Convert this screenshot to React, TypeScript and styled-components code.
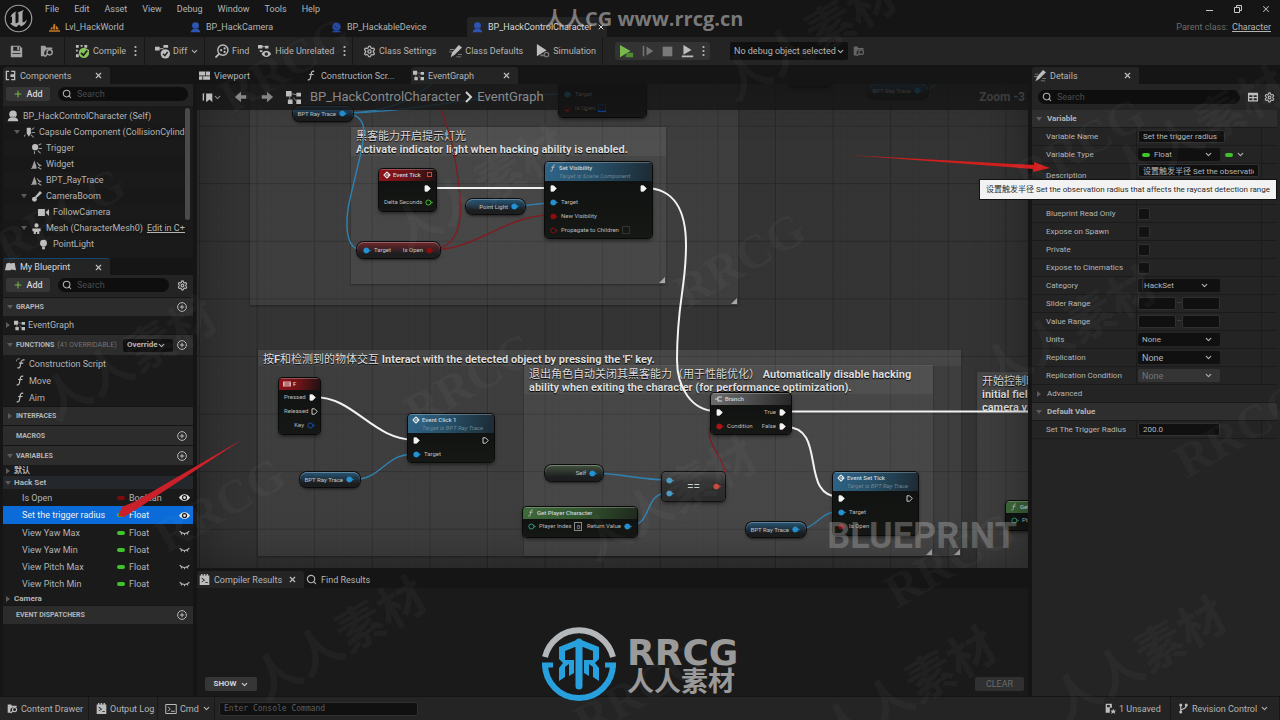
import React from "react";
import styled, { createGlobalStyle, css } from "styled-components";
import { ChevronDown, Plus, Search, Settings, X } from "lucide-react";

const GlobalStyle = createGlobalStyle`
  * { box-sizing: border-box; }
  body {
    margin: 0;
    background: #151515;
    color: #b4b4b4;
    font: 9px/12px Roboto, "Noto Sans CJK SC", sans-serif;
  }
  button, input, select {
    font: inherit;
    color: inherit;
    border: 0;
    padding: 0;
    margin: 0;
    background: none;
    outline: none;
  }
  svg { flex: none; }
  ul { list-style: none; margin: 0; padding: 0; }
`;

/* ---------- page frame ---------- */

const Page = styled.div`
  position: relative;
  display: flex;
  flex-direction: column;
  min-height: 100vh;
  overflow: hidden;
  white-space: nowrap;
`;

const Header = styled.header`
  display: flex;
  height: 37px;
`;

const LogoBox = styled.div`
  width: 44px;
  padding: 4px 0 0 4px;
`;

const HeaderMain = styled.div`
  flex: 1;
  display: flex;
  flex-direction: column;
`;

const MenuRow = styled.nav`
  display: flex;
  align-items: center;
  gap: 15px;
  height: 17px;
  padding-left: 1px;
`;

const AssetTabs = styled.div`
  display: flex;
  gap: 1px;
`;

const AssetTab = styled.button<{ $active?: boolean }>`
  display: flex;
  align-items: center;
  gap: 5px;
  width: 140px;
  height: 20px;
  padding-left: 5px;
  text-align: left;
  ${(p) => p.$active && css`background: #242424; color: #d8d8d8; border-radius: 3px 3px 0 0;`}
`;

const HeaderSide = styled.div`
  display: flex;
  flex-direction: column;
  align-items: flex-end;
  padding-right: 9px;
`;

const WindowButtons = styled.div`
  display: flex;
  align-items: center;
  gap: 18px;
  height: 17px;
  button { display: flex; }
`;

const ParentClass = styled.div`
  display: flex;
  align-items: center;
  gap: 4px;
  height: 20px;
  color: #6c6c6c;
  a { color: #b4b4b4; }
`;

/* ---------- toolbar ---------- */

const Toolbar = styled.div`
  display: flex;
  align-items: center;
  height: 28px;
  background: #242424;
  margin-bottom: 2px;
`;

const ToolGroup = styled.div<{ $w: number; $gap?: number }>`
  display: flex;
  align-items: center;
  width: ${(p) => p.$w}px;
  height: 28px;
  padding-left: 10px;
  gap: ${(p) => p.$gap ?? 10}px;
  border-right: 1px solid #171717;
`;

const ToolButton = styled.button`
  display: flex;
  align-items: center;
  gap: 3px;
  flex: none;
`;

const PlayGroup = styled.div`
  display: flex;
  align-items: center;
  justify-content: space-between;
  width: 95px;
  height: 18px;
  margin: 0 20px 0 12px;
  padding: 0 5px;
  background: #333;
  border-radius: 3px;
  button { display: flex; }
`;

const DebugTarget = styled.div`
  display: flex;
  align-items: center;
  gap: 5px;
`;

/* ---------- panels ---------- */

const Main = styled.main`
  flex: 1;
  display: grid;
  grid-template-columns: 193px minmax(0, 1fr) 248px;
  column-gap: 4px;
  min-height: 629px;
`;

const Sidebar = styled.aside`
  position: relative;
  display: flex;
  flex-direction: column;
  padding-left: 3px;
`;

const Panel = styled.section<{ $grow?: boolean }>`
  display: flex;
  flex-direction: column;
  background: #1a1a1a;
  ${(p) => p.$grow && css`flex: 1;`}
`;

const TabStrip = styled.div`
  display: flex;
  height: 17px;
  background: #151515;
`;

const PanelTab = styled.div<{ $active?: boolean; $focus?: boolean }>`
  display: flex;
  align-items: center;
  width: 107px;
  padding: 0 7px 0 2px;
  gap: 4px;
  ${(p) => p.$active && css`background: #242424; border-radius: 3px 3px 0 0;`}
  ${(p) => p.$focus && css`border-top: 1px solid #14456f; color: #d8d8d8;`}
`;

const TabLabel = styled.button`
  display: flex;
  align-items: center;
  flex: 1;
  gap: 4px;
  text-align: left;
`;

const CloseButton = styled.button`
  display: flex;
  color: #c4c4c4;
`;

const PanelTools = styled.div`
  display: flex;
  align-items: center;
  gap: 8px;
  height: 22px;
  padding: 0 5px 2px 3px;
  background: #242424;
`;

const AddButton = styled.button`
  display: flex;
  align-items: center;
  justify-content: center;
  gap: 3px;
  width: 44px;
  height: 14px;
  background: #363636;
  border-radius: 2px;
  color: #d6d6d6;
  font-weight: 500;
`;

const SearchPill = styled.label`
  display: flex;
  align-items: center;
  flex: 1;
  gap: 5px;
  height: 14px;
  padding: 0 4px;
  min-width: 0;
  border-radius: 7px;
  background: #0e0e0e;
  input { flex: 1; min-width: 0; }
  input::placeholder { color: #4c4c4c; opacity: 1; }
`;

const TreeArea = styled.div`
  display: flex;
  height: 152px;
  padding: 2px 3px 0 0;
  background: #1a1a1a;
`;

const Tree = styled.ul`
  flex: 1;
  min-width: 0;
  overflow: hidden;
`;

const TreeRow = styled.li<{ $depth: number }>`
  display: flex;
  align-items: center;
  height: 16px;
  gap: 4px;
  padding-left: ${(p) => 4 + p.$depth * 7}px;
  &:nth-child(even) { background: #181818; }
`;

const EditLink = styled.a`
  color: inherit;
`;

const Caret = styled.span<{ $closed?: boolean; $hidden?: boolean }>`
  flex: none;
  width: 0;
  height: 0;
  border: 3px solid transparent;
  ${(p) =>
    p.$closed
      ? css`border-left: 4px solid #5c5c5c; border-right: 0; margin: 0 1px;`
      : css`border-top: 4px solid #5c5c5c; border-bottom: 0;`}
  ${(p) => p.$hidden && css`visibility: hidden;`}
`;

const ScrollThumb = styled.div`
  width: 5px;
  height: 112px;
  border-radius: 3px;
  background: #4a4a4a;
`;

const SectionHead = styled.div<{ $h?: number }>`
  display: flex;
  align-items: center;
  height: ${(p) => p.$h ?? 19}px;
  padding: 0 6px 0 4px;
  gap: 3px;
  border-top: 1px solid #151515;
  background: #2c2c2c;
  font-size: 7px;
  font-weight: 700;
  small { font-size: 7px; font-weight: 400; color: #747474; }
  > button { display: flex; margin-left: auto; }
`;

const OverrideBox = styled.div`
  margin-left: auto;
  font-size: 8px;
  + button { margin-left: 1px; }
`;

const ListRow = styled.li<{ $h: number; $indent: number }>`
  display: flex;
  align-items: center;
  gap: 3px;
  height: ${(p) => p.$h}px;
  padding-left: ${(p) => p.$indent}px;
`;

const GroupRow = styled.div<{ $h: number; $lit?: boolean }>`
  display: flex;
  align-items: center;
  gap: 3px;
  height: ${(p) => p.$h}px;
  padding-left: 2px;
  font-size: 8px;
  font-weight: 700;
  ${(p) => p.$lit && css`background: #24272c;`}
`;

const VarRow = styled.li<{ $selected?: boolean }>`
  display: grid;
  grid-template-columns: 95px 12px 1fr 12px;
  align-items: center;
  height: ${(p) => (p.$selected ? 18 : 17)}px;
  padding: 0 2px 0 19px;
  ${(p) => p.$selected && css`background: #0b6bd8; color: #f0f0f0;`}
`;

const TypePill = styled.i<{ $red?: boolean }>`
  display: block;
  width: 8px;
  height: 4px;
  border-radius: 2px;
  background: ${(p) => (p.$red ? "#7a0c0c" : "#3fc22c")};
`;

/* ---------- selects and fields ---------- */

interface ShellProps { $w: number; $h?: number; $off?: boolean; $tight?: boolean; $split?: boolean; $big?: boolean }

const SelectShell = styled.label<ShellProps>`
  position: relative;
  display: flex;
  align-items: center;
  width: ${(p) => p.$w}px;
  height: ${(p) => p.$h ?? 13}px;
  border-radius: 2px;
  background: ${(p) => (p.$off ? "#343434" : "#101010")};
  padding-left: ${(p) => (p.$split ? 6 : 4)}px;
  gap: 4px;
  font-size: ${(p) => (p.$big ? "9px" : "inherit")};
  select {
    appearance: none;
    flex: 1;
    min-width: 0;
    padding-right: ${(p) => (p.$tight ? 0 : 14)}px;
  }
  select:disabled { color: #747474; opacity: 1; }
  > svg:last-child {
    position: absolute;
    right: ${(p) => (p.$tight ? 3 : p.$split ? 11 : 7)}px;
    pointer-events: none;
  }
  ${(p) => p.$split && css`box-shadow: inset 4px 0 0 #101010, inset 5px 0 0 #2a2a2a;`}
`;

interface DropProps {
  label: string;
  value: string;
  w: number;
  h?: number;
  disabled?: boolean;
  pill?: boolean;
  tight?: boolean;
  split?: boolean;
  big?: boolean;
}

const Drop = ({ label, value, w, h, disabled, pill, tight, split, big }: DropProps) => (
  <SelectShell $w={w} $h={h} $off={disabled} $tight={tight} $split={split} $big={big}>
    {pill && <TypePill />}
    <select aria-label={label} disabled={disabled} defaultValue={value}>
      <option>{value}</option>
    </select>
    <ChevronDown size={9} strokeWidth={3} />
  </SelectShell>
);

/* ---------- icons ---------- */

const Svg = ({ s = 12, children, c = "#bdbdbd" }: { s?: number; c?: string; children: React.ReactNode }) => (
  <svg width={s} height={s} viewBox="0 0 16 16" fill={c} stroke="none" aria-hidden="true">
    {children}
  </svg>
);

const UnrealLogo = () => (
  <svg width="29" height="29" viewBox="0 0 58 58" aria-hidden="true">
    <circle cx="29" cy="29" r="26.5" fill="#111" stroke="#9c9c9c" strokeWidth="2.4" />
    <path
      fill="#a8a8a8"
      d="M12 27 C15 20 20 16 26 14 C23 16 23 18 23 20 L23 37 C23 39 25 39 26 38 L29 36 L29 20 C29 18 28 18 26 19 C30 15 34 14 40 12 C38 14 37 16 37 18 L37 35 C37 37 39 37 41 36 L46 31 C44 39 39 43 34 45 L30 41 L25 46 C19 45 15 42 12 38 C14 39 16 38 16 36 L16 26 C16 24 14 25 12 27Z"
    />
  </svg>
);

const LevelIcon = () => (
  <Svg s={11} c="#c97a1e"><path d="M0 14h16v-2H0zM2 11l1-3 2-1v4zM6 11V4l3-2v9zM10 11V5l3 3 1 3z" /></Svg>
);
const ActorIcon = ({ c = "#2d55b4", s = 11 }: { c?: string; s?: number }) => (
  <Svg s={s} c={c}><circle cx="8" cy="5.5" r="5" /><path d="M1 15c0-3 2-4 4-5h6c2 1 4 2 4 5z" /><path d="M5 8.500c2 1.500 4 1.500 6 0" stroke="#0007" fill="none" /></Svg>
);
const SphereIcon = () => (
  <Svg s={11} c="#24489c"><circle cx="8" cy="7" r="6.2" /><path d="M2 13h12v2H2z" /><path d="M5 5l4 4" stroke="#0008" /></Svg>
);
const SaveIcon = () => (
  <Svg s={13} c="#a4a4a4"><path fillRule="evenodd" d="M1 1h11l3 3v11H1zM4 2v5h8V2z" /><path d="M9 2h2v4H9z" /><path d="M3 10h10v1H3z" fill="#242424" /></Svg>
);
const BrowseIcon = ({ c = "#9f9f9f", s = 14 }: { c?: string; s?: number }) => (
  <Svg s={s} c={c}>
    <path d="M1 2h5l1 2h7v2H8a5 5 0 0 0-2 8H1z" />
    <circle cx="11" cy="9.5" r="3" fill="none" stroke={c} strokeWidth="1.6" /><path d="M8.500 11.500l-3 3" stroke={c} strokeWidth="1.800" />
  </Svg>
);
const CompileIcon = () => (
  <Svg s={15}>
    <path d="M1 1h3v3H1zM6 1h2v2H6zM10 1h3v3h-3zM1 6h2v2H1zM1 11h3v3H1zM13 6h2v2h-2z" />
    <circle cx="9.500" cy="9.500" r="5.500" fill="#86c35a" /><path d="M6.500 9.500l2.500 2.500 4-5" fill="none" stroke="#1c1c1c" strokeWidth="1.800" />
  </Svg>
);
const DiffIcon = () => (
  <Svg s={15}>
    <path d="M0 3h5v4H0zM9 1h5v3H9z" /><path d="M5 5h4" stroke="#bdbdbd" />
    <circle cx="11" cy="10.500" r="5" /><path d="M8.500 10.500l2 2 3-4" fill="none" stroke="#242424" strokeWidth="1.600" />
  </Svg>
);
const FindIcon = () => (
  <Svg s={14}>
    <circle cx="9" cy="7" r="5.800" fill="none" stroke="#bdbdbd" strokeWidth="1.600" />
    <path d="M5 11l-4.500 4.500" stroke="#bdbdbd" strokeWidth="2" /><circle cx="7" cy="7" r="1.300" /><circle cx="11" cy="5" r="1.300" /><circle cx="11" cy="9" r="1.300" />
  </Svg>
);
const HideIcon = () => (
  <Svg s={14}>
    <path d="M0 1h5v4H0zM8 2h4v3H8zM2 7h3v2H2z" /><path d="M4 3h5" stroke="#bdbdbd" />
    <path d="M4 11.500c3-5 8-5 11 0-3 4.500-8 4.500-11 0z" /><circle cx="9.500" cy="11.500" r="2" fill="#242424" />
  </Svg>
);
const PenIcon = ({ s = 12 }: { s?: number }) => (
  <Svg s={s}><path d="M12 0l4 3-9 9-5 3 2-6z" /><path d="M1 5h5v1H1zM0 8h4v1H0zM11 11h5v1h-5zM9 14h6v1H9z" fill="#8a8a8a" /></Svg>
);
const SimIcon = () => (
  <Svg s={14}><path d="M1 0l11 7-11 7z" /><circle cx="12" cy="12" r="2.500" fill="none" stroke="#777" strokeWidth="1.500" /><path d="M5 12h4v2H5z" fill="#777" /></Svg>
);
const PlayIcon = () => (
  <Svg s={14} c="#79b84a"><path d="M0 1l12 7-12 7z" /><path d="M8 10h7v5H6z" fill="#4f8a35" /></Svg>
);
const StepIcon = () => (
  <Svg s={12} c="#747474"><path d="M1 1h2v14H1z" /><path d="M6 2l9 6-9 6z" /></Svg>
);
const StopIcon = () => <Svg s={11} c="#7a7a7a"><path d="M1 1h14v14H1z" /></Svg>;
const EjectIcon = () => <Svg s={13}><path d="M3 0l10 6-10 6zM1 13h14v2H1z" /></Svg>;
const DotsIcon = () => (
  <svg width="3" height="12" viewBox="0 0 3 12" fill="#bdbdbd" aria-hidden="true">
    <circle cx="1.500" cy="2" r="1.100" /><circle cx="1.500" cy="6" r="1.100" /><circle cx="1.500" cy="10" r="1.100" />
  </svg>
);
const CompIcon = () => (
  <Svg s={11}><path d="M1 1h5v2H3v10h3v2H1zM9 1h6v14H9v-2h4v-3H8V6h5V3H9z" /></Svg>
);
const BookIcon = () => <Svg s={11}><path d="M2 2l5-1 1 1 6-1 2 11-7-1-1 1-8 0z" /></Svg>;
const ViewIcon = () => <Svg s={11}><path d="M0 2h9v6H0zM10 2h6v6h-6zM0 9h5v5H0zM6 9h10v5H6z" /></Svg>;
const FuncIcon = ({ s = 11 }: { s?: number }) => (
  <Svg s={s}><path d="M12 2c-3-1-4 1-4.500 4L6.500 11c-.5 3-1.500 4-4 3M4.500 6.500h6.500" fill="none" stroke="#bdbdbd" strokeWidth="1.700" /></Svg>
);
const ScriptIcon = () => (
  <Svg s={11}><path d="M14 3c-3-1-5 1-5.500 4L7.500 12c-.5 2-1.500 3-4 2M6 7.500h6" fill="none" stroke="#bdbdbd" strokeWidth="1.600" /><path d="M2 5c0-3 2-4 5-4" fill="none" stroke="#bdbdbd" /></Svg>
);
const GraphIcon = ({ s = 12 }: { s?: number }) => (
  <Svg s={s}><path d="M0 1h6v6H0zM11 3h5v4h-5zM2 10h5v5H2zM11 10h5v5h-5z" /><path d="M6 4l5 1M4 6v5M8 8l3 4" stroke="#8d8d8d" /></Svg>
);
const CapsuleIcon = () => (
  <Svg s={11}><path d="M4 1h6v8l-3 5-3-5z" /><path d="M11 4l4-3M11 8h5M10 11l4 4M2 11l-2 3" stroke="#8d8d8d" strokeWidth="1.500" /></Svg>
);
const TriggerIcon = () => (
  <Svg s={11}><circle cx="6" cy="6" r="4.500" /><path d="M11 3l4-2M11 8h5M10 11l4 4M5 12v4" stroke="#9d9d9d" strokeWidth="1.500" /></Svg>
);
const SceneIcon = () => (
  <Svg s={11} c="#9f9f9f"><path d="M1 13l4-11 3 9v2zM0 13h8v1H0z" /><path d="M9 5l4 6M10 12l5 3M12 8l3 2" stroke="#9f9f9f" strokeWidth="1.500" /></Svg>
);
const BoomIcon = () => (
  <Svg s={11}><path d="M13 0l3 3-8 7-2-2z" /><circle cx="5" cy="12" r="3.500" /></Svg>
);
const CameraIcon = () => <Svg s={11}><path d="M0 3h10v10H0zM11 8l5-5v10z" /></Svg>;
const MeshIcon = () => (
  <Svg s={11}><circle cx="8" cy="3.500" r="3" /><path d="M2 8h12v4h-2v4h-3v-3H7v3H4v-4H2z" /></Svg>
);
const BulbIcon = () => <Svg s={11}><circle cx="8" cy="6" r="5" /><path d="M6 11h4v4H6z" /></Svg>;
const AddCircle = () => (
  <svg width="10" height="10" viewBox="0 0 16 16" fill="none" stroke="#b8b8b8" strokeWidth="1.600" aria-hidden="true">
    <circle cx="8" cy="8" r="7" /><path d="M8 4.500v7M4.500 8h7" />
  </svg>
);
const EyeIcon = () => (
  <Svg s={11} c="#e4e4e4"><path d="M0 8c4-6.500 12-6.500 16 0-4 6.500-12 6.500-16 0z" /><circle cx="8" cy="8" r="3.800" fill="#1a1a1a" /><circle cx="8" cy="8" r="2" /></Svg>
);
const EyeShutIcon = () => (
  <Svg s={11}><path d="M1 6c3 4.500 11 4.500 14 0M4 9l-1 2M8 10v2M12 9l1 2" fill="none" stroke="#b4b4b4" strokeWidth="1.500" /></Svg>
);
const LogIcon = () => (
  <Svg s={11}><path fillRule="evenodd" d="M1 2h2V0h2v2h2V0h2v2h2V0h2v2h2v14H1zM4 5v2l3 2-3 2v1l5-3zM9 12v1h4v-1z" /></Svg>
);
const CmdIcon = () => (
  <Svg s={12}><path d="M1 2h14v12H1z" fill="none" stroke="#bdbdbd" strokeWidth="1.300" /><path d="M4 5l3 3-3 3M8 11h5" fill="none" stroke="#bdbdbd" strokeWidth="1.300" /></Svg>
);
const UnsavedIcon = () => (
  <Svg s={11}><path fillRule="evenodd" d="M1 1h9v6H7v7H1zM3 3v3h4V3z" /><path d="M12 8l1 3h3l-2 2 1 3-3-2-3 2 1-3-2-2h3z" /></Svg>
);
const BranchIcon = () => (
  <Svg s={11}><circle cx="4" cy="3" r="2.200" /><circle cx="12" cy="3" r="2.200" /><circle cx="4" cy="13" r="2.200" /><path d="M4 3v10M12 4c0 4-4 5-8 6" fill="none" stroke="#bdbdbd" strokeWidth="1.800" /></Svg>
);
const TableIcon = () => (
  <Svg s={10}><path fillRule="evenodd" d="M0 1h16v14H0zM2 5v3h5V5zM9 5v3h5V5zM2 10v3h5v-3zM9 10v3h5v-3z" /></Svg>
);
const ArrowIcon = ({ flip }: { flip?: boolean }) => (
  <Svg s={14} c="#858585"><path d={flip ? "M15 8L8 2v4H2v4h6v4z" : "M1 8l7-6v4h6v4H8v4z"} /></Svg>
);
const BookmarkIcon = () => (
  <Svg s={11}><path d="M1 2h3v1H3v9l-2 1zM6 2h9v13l-4-4-5 4z" /></Svg>
);

/* ---------- graph ---------- */

const Center = styled.div`
  display: flex;
  flex-direction: column;
  min-width: 0;
`;

const GraphCanvas = styled.div`
  position: relative;
  flex: none;
  height: 484px;
  overflow: hidden;
  background: #343434;
`;

const Layer = styled.svg`
  position: absolute;
  inset: 0;
  width: 100%;
  height: 100%;
`;

const Vignette = styled.div`
  position: absolute;
  inset: 0;
  pointer-events: none;
  box-shadow: inset 0 0 50px rgba(0, 0, 0, 0.4);
`;

const Crumbs = styled.div`
  position: absolute;
  top: 0;
  left: 0;
  right: 0;
  display: flex;
  align-items: center;
  height: 26px;
  padding: 0 3px 0 5px;
  gap: 12px;
  background: rgba(20, 20, 20, 0.78);
  color: #8a8a8a;
  font-size: 13px;
  line-height: 16px;
  button { display: flex; align-items: center; }
`;

const Path = styled.div`
  display: flex;
  align-items: center;
  gap: 4px;
  > svg:first-child { margin-right: 5px; }
`;

const ZoomLabel = styled.span`
  margin-left: auto;
  color: #3d3d3d;
  font-size: 12px;
  font-weight: 700;
`;

const Stamp = styled.div`
  position: absolute;
  right: 11px;
  bottom: 12px;
  color: rgba(200, 200, 200, 0.34);
  font-size: 36px;
  line-height: 40px;
  font-weight: 700;
`;

interface Box { $x: number; $y: number; $w: number; $h: number }

const place = css<Box>`
  position: absolute;
  left: ${(p) => p.$x}px;
  top: ${(p) => p.$y}px;
  width: ${(p) => p.$w}px;
  height: ${(p) => p.$h}px;
`;

const Comment = styled.div<Box>`
  ${place}
  background: rgba(255, 255, 255, 0.05);
  box-shadow: 0 1px 2px rgba(0, 0, 0, 0.35);
  &::after {
    content: "";
    position: absolute;
    right: 1px;
    bottom: 1px;
    border: 3px solid transparent;
    border-right-color: #a8a8a8;
    border-bottom-color: #a8a8a8;
  }
`;

const CommentTitle = styled.div`
  padding: 3px 5px 0;
  background: rgba(255, 255, 255, 0.05);
  color: #dcdcdc;
  font-size: 11px;
  line-height: 13px;
  font-weight: 700;
  text-shadow: 0 1px 1px #000;
  span { font-weight: 400; }
`;

const Node = styled.div<Box>`
  ${place}
  border-radius: 4px;
  background: linear-gradient(#0e100f, #161816);
  box-shadow: 0 0 0 1px #0a0a0a, 0 2px 4px rgba(0, 0, 0, 0.6);
  overflow: hidden;
  color: #bcbcbc;
  font-size: 6px;
  line-height: 8px;
`;

const tones = {
  red: "linear-gradient(100deg, #8f1219, #6d1418 50%, #1c1112)",
  blue: "linear-gradient(100deg, #2e6488, #275069 45%, #1c2a33)",
  green: "linear-gradient(100deg, #3f6b3c, #34552f 50%, #1f2a1e)",
  grey: "linear-gradient(100deg, #6d6d6d, #4d4d4d 50%, #262626)",
};

const NodeHead = styled.div<{ $tone: keyof typeof tones; $tall?: boolean }>`
  display: flex;
  align-items: flex-start;
  height: ${(p) => (p.$tall ? 19 : 12)}px;
  padding: 2px 4px;
  gap: 2px;
  background: ${(p) => tones[p.$tone]};
  box-shadow: inset 0 1px 0 rgba(255, 255, 255, 0.25);
  color: #cdd6da;
  font-weight: 500;
  small { display: block; font-size: 6px; font-weight: 400; font-style: italic; color: #6d8795; }
  > i { margin-left: auto; width: 5px; height: 5px; margin-top: 1px; border: 1px solid #e0402f; }
`;

const PinRow = styled.div<{ $h?: number }>`
  display: flex;
  align-items: center;
  justify-content: space-between;
  height: ${(p) => p.$h ?? 14}px;
  padding: 0 5px;
`;

const PinLabel = styled.label`
  display: flex;
  align-items: center;
  gap: 3px;
  input[type="checkbox"] {
    appearance: none;
    width: 8px;
    height: 8px;
    border: 1px solid #333;
  }
  input[type="checkbox"]:checked { border-color: #14408c; background: #0b1c3c; }
  input[type="text"] { width: 8px; height: 9px; border: 1px solid #8a8a8a; text-align: center; }
`;

const Pill = styled.div<Box & { $tint: string; $end?: boolean }>`
  ${place}
  display: flex;
  align-items: center;
  justify-content: ${(p) => (p.$end ? "flex-end" : "space-between")};
  padding: 0 6px;
  gap: 3px;
  border-radius: 7px;
  background: linear-gradient(${(p) => p.$tint}, rgba(24, 26, 28, 0.92) 75%);
  box-shadow: 0 0 0 1px #0c0c0c, inset 0 1px 0 rgba(255, 255, 255, 0.28), 0 2px 3px rgba(0, 0, 0, 0.6);
  color: #c4c4c4;
  font-size: 6px;
  line-height: 8px;
`;

const OpNode = styled.div<Box>`
  ${place}
  display: flex;
  align-items: center;
  justify-content: space-between;
  padding: 0 4px;
  border-radius: 4px;
  background: linear-gradient(#4a4a4a, #303030 40%, #2a2a2a);
  box-shadow: 0 0 0 1px #101010, 0 2px 4px rgba(0, 0, 0, 0.6);
  color: #cfcfcf;
  font-size: 12px;
`;

const OpPins = styled.div`
  display: flex;
  flex-direction: column;
  gap: 6px;
`;

const BLUE = "#2493d6";
const RED = "#8a0f0f";

const Exec = ({ off }: { off?: boolean }) => (
  <svg width="7" height="7" viewBox="0 0 7 7" aria-hidden="true">
    <path d="M1 .8h2.600L6.300 3.500 3.600 6.200H1z" fill={off ? "none" : "#f4f4f4"} stroke="#f4f4f4" strokeWidth=".8" />
  </svg>
);
const Dot = ({ c, off }: { c: string; off?: boolean }) => (
  <svg width="8" height="7" viewBox="0 0 8 7" aria-hidden="true">
    <circle cx="3.300" cy="3.500" r="2.500" fill={off ? "none" : c} stroke={c} strokeWidth="1" />
    <path d="M6.300 2.200L8 3.500 6.300 4.800z" fill={c} />
  </svg>
);
const EventMark = () => (
  <svg width="8" height="8" viewBox="0 0 8 8" aria-hidden="true">
    <path d="M4 1L1 4l3 3M4 1l3 3-3 3M3 4h4" fill="none" stroke="#e8e8e8" strokeWidth="1.100" />
  </svg>
);
const KeyboardMark = () => (
  <Svg s={8} c="#e0b0b0"><path d="M0 3h16v10H0z" /><path d="M3 6h10M3 10h10" stroke="#7d1016" strokeWidth="1.500" /></Svg>
);
const BranchMark = () => <Svg s={8} c="#ddd"><path d="M0 7h5V3h9v2H7v6h7v2H5V9H0z" /></Svg>;

const RayPill = ({ x, y }: { x: number; y: number }) => (
  <Pill $x={x} $y={y} $w={60} $h={15} $tint="#27587a" $end>
    BPT Ray Trace <Dot c={BLUE} />
  </Pill>
);

const Graph = () => (
  <GraphCanvas>
    <Layer aria-hidden="true">
      <defs>
        <pattern id="minor" width="7.200" height="7.200" x="2" y="-1.200" patternUnits="userSpaceOnUse">
          <path d="M0 .5H7.200M.5 0V7.200" stroke="#313131" strokeWidth=".6" fill="none" />
        </pattern>
        <pattern id="major" width="57.600" height="57.600" x="2" y="41.500" patternUnits="userSpaceOnUse">
          <path d="M0 .5H57.600M.5 0V57.600" stroke="#282828" strokeWidth="1" fill="none" />
        </pattern>
      </defs>
      <rect width="100%" height="100%" fill="url(#minor)" />
      <rect width="100%" height="100%" fill="url(#major)" />
    </Layer>

    <Comment $x={53} $y={-40} $w={488} $h={261} />
    <Comment $x={154} $y={43} $w={315} $h={157}>
      <CommentTitle>
        <span>黑客能力开启提示灯光</span>
        <br />
        Activate indicator light when hacking ability is enabled.
      </CommentTitle>
    </Comment>
    <Comment $x={61} $y={266} $w={703} $h={206}>
      <CommentTitle>
        <span>按</span>F<span>和检测到的物体交互</span> Interact with the detected object by pressing the 'F' key.
      </CommentTitle>
    </Comment>
    <Comment $x={327} $y={281} $w={409} $h={191}>
      <CommentTitle>
        <span>退出角色自动关闭其黑客能力（用于性能优化）</span> Automatically disable hacking
        <br />
        ability when exiting the character (for performance optimization).
      </CommentTitle>
    </Comment>
    <Comment $x={780} $y={288} $w={200} $h={260}>
      <CommentTitle>
        <span>开始控制时</span>
        <br />
        initial field
        <br />
        camera view
      </CommentTitle>
    </Comment>

    <Layer aria-hidden="true">
      <g transform="translate(-197 -84)" fill="none" strokeWidth="1.400">
        <g stroke="#2f83b4">
          <path d="M345 113C420 112 470 94 566 94" />
          <path d="M345 113C400 112 420 92 432 84" />
          <path d="M345 113C372 115 364 140 358 165C350 200 346 210 347 228C348 242 352 250 362 250" />
          <path d="M516 206C530 206 535 203 552 203" />
          <path d="M349 480C385 480 382 454 415 454" />
          <path d="M592 473C620 473 640 480 668 480" />
          <path d="M627 526C655 526 642 493 668 493" />
          <path d="M794 530C818 530 818 511 842 511" />
          <path d="M917 91C926 91 930 89 935 85" />
        </g>
        <g stroke="#7d1e22">
          <path d="M434 250C480 248 505 215 552 215" />
          <path d="M434 250C466 244 462 205 458 180C454 145 449 130 440 108" />
          <path d="M717 486C740 470 704 448 710 428L718 426" />
        </g>
        <g stroke="#f2f2f2" strokeWidth="2">
          <path d="M430 188H552" />
          <path d="M645 188C675 188 686 212 686 245C686 290 677 300 677 360C677 388 692 411 716 411" />
          <path d="M314 397C355 397 372 440 416 440" />
          <path d="M786 411.500H1300" />
          <path d="M786 427C828 427 798 497 840 497" />
        </g>
      </g>
    </Layer>

    <Node $x={362} $y={-20} $w={87} $h={53}>
      <NodeHead $tone="blue" $tall />
      <PinRow $h={4} />
      <PinRow><PinLabel><Dot c={BLUE} />Target</PinLabel></PinRow>
      <PinRow>
        <PinLabel><Dot c={RED} off />Is Open <input type="checkbox" defaultChecked /></PinLabel>
      </PinRow>
    </Node>
    <Node $x={592} $y={-20} $w={42} $h={23} />
    <RayPill x={671} y={-1} />
    <RayPill x={96} y={22} />

    <Node $x={182} $y={85} $w={57} $h={42}>
      <NodeHead $tone="red"><EventMark />Event Tick<i /></NodeHead>
      <PinRow><span /><Exec /></PinRow>
      <PinRow><span /><PinLabel>Delta Seconds<Dot c="#3fc22c" off /></PinLabel></PinRow>
    </Node>
    <Node $x={348} $y={78} $w={107} $h={76}>
      <NodeHead $tone="blue" $tall><FuncIcon s={8} /><div>Set Visibility<small>Target is Scene Component</small></div></NodeHead>
      <PinRow><Exec /><Exec /></PinRow>
      <PinRow><PinLabel><Dot c={BLUE} />Target</PinLabel></PinRow>
      <PinRow><PinLabel><Dot c={RED} />New Visibility</PinLabel></PinRow>
      <PinRow><PinLabel><Dot c={RED} off />Propagate to Children<input type="checkbox" /></PinLabel></PinRow>
    </Node>
    <Pill $x={269} $y={115} $w={59} $h={15} $tint="#27587a" $end>Point Light <Dot c={BLUE} /></Pill>
    <Pill $x={160} $y={158} $w={83} $h={16} $tint="#70262a">
      <PinLabel><Dot c={BLUE} />Target</PinLabel>
      <PinLabel>Is Open<Dot c={RED} /></PinLabel>
    </Pill>

    <Node $x={82} $y={294} $w={41} $h={56}>
      <NodeHead $tone="red"><KeyboardMark />F</NodeHead>
      <PinRow><span /><PinLabel>Pressed<Exec /></PinLabel></PinRow>
      <PinRow><span /><PinLabel>Released<Exec off /></PinLabel></PinRow>
      <PinRow><span /><PinLabel>Key<Dot c="#1550a8" off /></PinLabel></PinRow>
    </Node>
    <Node $x={211} $y={330} $w={86} $h={48}>
      <NodeHead $tone="blue" $tall><EventMark /><div>Event Click 1<small>Target is BPT Ray Trace</small></div></NodeHead>
      <PinRow><Exec /><Exec off /></PinRow>
      <PinRow><PinLabel><Dot c={BLUE} />Target</PinLabel></PinRow>
    </Node>
    <RayPill x={103} y={388} />

    <Pill $x={348} $y={381} $w={58} $h={16} $tint="#42523f" $end>Self <Dot c={BLUE} /></Pill>
    <Node $x={326} $y={423} $w={114} $h={30}>
      <NodeHead $tone="green"><FuncIcon s={8} />Get Player Character</NodeHead>
      <PinRow>
        <PinLabel><Dot c="#2a9d7c" off />Player Index<input type="text" defaultValue="0" /></PinLabel>
        <PinLabel>Return Value<Dot c={BLUE} /></PinLabel>
      </PinRow>
    </Node>
    <OpNode $x={465} $y={388} $w={63} $h={29}>
      <OpPins><Dot c="#4a9cc4" /><Dot c="#4a9cc4" /></OpPins>
      <span>==</span>
      <Dot c="#c4503c" />
    </OpNode>
    <Node $x={514} $y={309} $w={80} $h={41}>
      <NodeHead $tone="grey"><BranchMark />Branch</NodeHead>
      <PinRow><Exec /><PinLabel>True<Exec /></PinLabel></PinRow>
      <PinRow><PinLabel><Dot c="#b01414" />Condition</PinLabel><PinLabel>False<Exec /></PinLabel></PinRow>
    </Node>
    <Node $x={636} $y={388} $w={85} $h={63}>
      <NodeHead $tone="blue" $tall><EventMark /><div>Event Set Tick<small>Target is BPT Ray Trace</small></div></NodeHead>
      <PinRow><Exec /><Exec off /></PinRow>
      <PinRow><PinLabel><Dot c={BLUE} />Target</PinLabel></PinRow>
      <PinRow><PinLabel><Dot c={RED} />Is Open</PinLabel></PinRow>
    </Node>
    <RayPill x={549} y={438} />
    <Node $x={809} $y={417} $w={114} $h={29}>
      <NodeHead $tone="green"><FuncIcon s={8} />Get Player Character</NodeHead>
      <PinRow><PinLabel><Dot c="#2a9d7c" off />Player Index</PinLabel></PinRow>
    </Node>

    <Stamp>BLUEPRINT</Stamp>
    <Vignette />
    <Crumbs>
      <button aria-label="Bookmarks"><BookmarkIcon /><ChevronDown size={9} strokeWidth={3} /></button>
      <button aria-label="Back"><ArrowIcon /></button>
      <button aria-label="Forward"><ArrowIcon flip /></button>
      <Path>
        <GraphIcon s={15} />
        <span>BP_HackControlCharacter</span>
        <svg width="9" height="12" viewBox="0 0 9 12" fill="none" stroke="#d0d0d0" strokeWidth="2" aria-hidden="true"><path d="M2 1l5 5-5 5" /></svg>
        <span>EventGraph</span>
      </Path>
      <ZoomLabel>Zoom -3</ZoomLabel>
    </Crumbs>
  </GraphCanvas>
);

const Results = styled.section`
  display: flex;
  flex-direction: column;
  flex: 1;
  margin-top: 3px;
  background: #1a1a1a;
`;

const ResultsFoot = styled.div`
  display: flex;
  justify-content: space-between;
  margin-top: auto;
  padding: 0 4px 5px 8px;
`;

const FootButton = styled.button<{ $dim?: boolean }>`
  display: flex;
  align-items: center;
  justify-content: center;
  gap: 3px;
  width: ${(p) => (p.$dim ? 49 : 52)}px;
  height: 14px;
  border-radius: 2px;
  background: ${(p) => (p.$dim ? "#303030" : "#363636")};
  color: ${(p) => (p.$dim ? "#6a6a6a" : "#d2d2d2")};
  font-size: ${(p) => (p.$dim ? 9 : 8)}px;
  font-weight: ${(p) => (p.$dim ? 400 : 700)};
`;

/* ---------- details ---------- */

const Details = styled.aside`
  position: relative;
  z-index: 2;
  display: flex;
  flex-direction: column;
  padding-right: 3px;
  background: #242424;
  font-size: 8px;
`;

const DetailsStrip = styled(TabStrip)`
  margin-right: -3px;
  font-size: 9px;
`;

const DetailsTools = styled(PanelTools)`
  height: 26px;
  padding: 0 2px 0 6px;
  font-size: 9px;
  ${SearchPill} { margin-right: 2px; }
  gap: 6px;
`;

const Category = styled.div<{ $plain?: boolean }>`
  display: flex;
  align-items: center;
  height: 18px;
  gap: 5px;
  padding-left: 4px;
  border-bottom: 1px solid #1a1a1a;
  background: ${(p) => (p.$plain ? "#242424" : "#2e2e2e")};
  font-weight: ${(p) => (p.$plain ? 400 : 700)};
`;

const Prop = styled.div<{ $h?: number }>`
  position: relative;
  display: grid;
  grid-template-columns: 105px 1fr 15px;
  align-items: stretch;
  height: ${(p) => p.$h ?? 18}px;
  border-bottom: 1px solid #1b1b1b;
`;

const PropName = styled.span<{ $low?: boolean }>`
  padding: ${(p) => (p.$low ? 6 : 3)}px 0 0 14px;
  line-height: 12px;
  border-right: 1px solid #1b1b1b;
`;

const PropValue = styled.div<{ $flush?: boolean; $gap?: number }>`
  display: flex;
  align-items: flex-start;
  gap: ${(p) => p.$gap ?? 5}px;
  padding: ${(p) => (p.$flush ? 0 : 2)}px 0 0 1px;
  border-right: 1px solid #1b1b1b;
`;

const Field = styled.input<{ $w: number }>`
  width: ${(p) => p.$w}px;
  height: 13px;
  padding: 0 4px;
  border: 1px solid #303030;
  border-radius: 2px;
  background: #101010;
`;

const Check = styled.input`
  appearance: none;
  width: 12px;
  height: 12px;
  margin-top: 1px;
  border: 1px solid #303030;
  border-radius: 2px;
  background: #121212;
`;

const RangeGap = styled.span`
  width: 6px;
  text-align: center;
  color: #7a7a7a;
`;

const TypeButton = styled.button`
  display: flex;
  align-items: center;
  gap: 3px;
  height: 13px;
`;

const Tooltip = styled.div`
  position: absolute;
  z-index: 3;
  top: 15px;
  right: 0;
  height: 21px;
  padding: 0 6px;
  border: 1px solid #111;
  background: #f2f2f2;
  color: #2a2a2a;
  line-height: 19px;
`;

const PointerArrow = styled.svg<{ $top: number; $left: number }>`
  position: absolute;
  z-index: 4;
  top: ${(p) => p.$top}px;
  left: ${(p) => p.$left}px;
  pointer-events: none;
`;

const checks = ["Blueprint Read Only", "Expose on Spawn", "Private", "Expose to Cinematics"];

const DetailsPanel = () => (
  <Details>
    <DetailsStrip>
      <PanelTab $active>
        <TabLabel><PenIcon />Details</TabLabel>
        <CloseButton aria-label="Close Details"><X size={9} strokeWidth={3} /></CloseButton>
      </PanelTab>
    </DetailsStrip>
    <DetailsTools>
      <SearchPill><Search size={10} strokeWidth={2.5} /><input placeholder="Search" aria-label="Search details" /></SearchPill>
      <TableIcon />
      <Settings size={11} strokeWidth={2.5} />
    </DetailsTools>
    <Category><Caret />Variable</Category>
    <Prop>
      <PropName>Variable Name</PropName>
      <PropValue><Field $w={87} defaultValue="Set the trigger radius" aria-label="Variable Name" /></PropValue>
    </Prop>
    <Prop>
      <PropName>Variable Type</PropName>
      <PropValue>
        <Drop label="Variable Type" value="Float" w={82} pill />
        <TypeButton aria-label="Container type"><TypePill /><ChevronDown size={9} strokeWidth={3} /></TypeButton>
      </PropValue>
    </Prop>
    <Prop $h={41}>
      <PropName $low>Description</PropName>
      <PropValue $flush><Field $w={121} defaultValue="设置触发半径 Set the observation" aria-label="Description" /></PropValue>
      <Tooltip role="tooltip">设置触发半径 Set the observation radius that affects the raycast detection range</Tooltip>
    </Prop>
    {checks.map((name) => (
      <Prop as="label" key={name}>
        <PropName>{name}</PropName>
        <PropValue><Check type="checkbox" /></PropValue>
      </Prop>
    ))}
    <Prop><PropName>Category</PropName><PropValue><Drop label="Category" value="HackSet" w={82} split /></PropValue></Prop>
    {["Slider Range", "Value Range"].map((name) => (
      <Prop key={name}>
        <PropName>{name}</PropName>
        <PropValue $gap={0}>
          <Field $w={38} aria-label={`${name} minimum`} />
          <RangeGap>··</RangeGap>
          <Field $w={38} aria-label={`${name} maximum`} />
        </PropValue>
      </Prop>
    ))}
    <Prop><PropName>Units</PropName><PropValue><Drop label="Units" value="None" w={82} /></PropValue></Prop>
    <Prop><PropName>Replication</PropName><PropValue><Drop label="Replication" value="None" w={82} big /></PropValue></Prop>
    <Prop><PropName>Replication Condition</PropName><PropValue><Drop label="Replication Condition" value="None" w={82} big disabled /></PropValue></Prop>
    <Category $plain><Caret $closed />Advanced</Category>
    <Category><Caret />Default Value</Category>
    <Prop>
      <PropName>Set The Trigger Radius</PropName>
      <PropValue><Field $w={82} defaultValue="200.0" aria-label="Set The Trigger Radius" /></PropValue>
    </Prop>
    <PointerArrow $top={84} $left={-184} width="206" height="24" viewBox="0 0 206 24" aria-hidden="true">
      <path d="M0 4L186 14V11L202 17L185 21V18Z" fill="#d01f1c" />
    </PointerArrow>
  </Details>
);

/* ---------- left column ---------- */

type TreeItem = { depth: number; icon: React.ReactNode; name: string; open?: boolean; link?: boolean };

const tree: TreeItem[] = [
  { depth: 0, icon: <ActorIcon c="#bdbdbd" s={12} />, name: "BP_HackControlCharacter (Self)" },
  { depth: 1, icon: <CapsuleIcon />, name: "Capsule Component (CollisionCylinder)", open: true },
  { depth: 2, icon: <TriggerIcon />, name: "Trigger" },
  { depth: 2, icon: <SceneIcon />, name: "Widget" },
  { depth: 2, icon: <SceneIcon />, name: "BPT_RayTrace" },
  { depth: 2, icon: <BoomIcon />, name: "CameraBoom", open: true },
  { depth: 3, icon: <CameraIcon />, name: "FollowCamera" },
  { depth: 2, icon: <MeshIcon />, name: "Mesh (CharacterMesh0)", open: true, link: true },
  { depth: 3, icon: <BulbIcon />, name: "PointLight" },
];

const variables = [
  { name: "Is Open", type: "Boolean", shown: true, red: true },
  { name: "Set the trigger radius", type: "Float", shown: true, selected: true },
  { name: "View Yaw Max", type: "Float" },
  { name: "View Yaw Min", type: "Float" },
  { name: "View Pitch Max", type: "Float" },
  { name: "View Pitch Min", type: "Float" },
];

const AddTo = ({ what }: { what: string }) => <button aria-label={`Add ${what}`}><AddCircle /></button>;

const LeftColumn = () => (
  <Sidebar>
    <Panel>
      <TabStrip>
        <PanelTab $active>
          <TabLabel><CompIcon />Components</TabLabel>
          <CloseButton aria-label="Close Components"><X size={9} strokeWidth={3} /></CloseButton>
        </PanelTab>
      </TabStrip>
      <PanelTools>
        <AddButton><Plus size={10} strokeWidth={2.500} color="#79b84a" />Add</AddButton>
        <SearchPill><Search size={10} strokeWidth={2.500} /><input placeholder="Search" aria-label="Search components" /></SearchPill>
      </PanelTools>
      <TreeArea>
        <Tree>
          {tree.map((item) => (
            <TreeRow key={item.name} $depth={item.depth}>
              {item.depth > 0 && <Caret $hidden={!item.open} />}
              {item.icon}
              <span>{item.name}</span>
              {item.link && <EditLink href="#edit">Edit in C++</EditLink>}
            </TreeRow>
          ))}
        </Tree>
        <ScrollThumb />
      </TreeArea>
    </Panel>
    <Panel $grow>
      <TabStrip>
        <PanelTab $active $focus>
          <TabLabel><BookIcon />My Blueprint</TabLabel>
          <CloseButton aria-label="Close My Blueprint"><X size={9} strokeWidth={3} /></CloseButton>
        </PanelTab>
      </TabStrip>
      <PanelTools>
        <AddButton><Plus size={10} strokeWidth={2.500} color="#79b84a" />Add</AddButton>
        <SearchPill><Search size={10} strokeWidth={2.500} /><input placeholder="Search" aria-label="Search blueprint" /></SearchPill>
        <Settings size={11} strokeWidth={2.500} />
      </PanelTools>
      <SectionHead><Caret />GRAPHS<AddTo what="graph" /></SectionHead>
      <ul>
        <ListRow $h={18} $indent={2}><Caret $closed /><GraphIcon s={11} />EventGraph</ListRow>
      </ul>
      <SectionHead $h={21}>
        <Caret />FUNCTIONS <small>(41 OVERRIDABLE)</small>
        <OverrideBox>
          <Drop label="Override" value="Override" w={50} h={13} />
        </OverrideBox>
        <AddTo what="function" />
      </SectionHead>
      <ul>
        <ListRow $h={17} $indent={12}><ScriptIcon />Construction Script</ListRow>
        <ListRow $h={17} $indent={12}><FuncIcon />Move</ListRow>
        <ListRow $h={17} $indent={12}><FuncIcon />Aim</ListRow>
      </ul>
      <SectionHead><Caret $closed />INTERFACES</SectionHead>
      <SectionHead $h={20}><Caret $hidden />MACROS<AddTo what="macro" /></SectionHead>
      <SectionHead $h={20}><Caret />VARIABLES<AddTo what="variable" /></SectionHead>
      <GroupRow $h={11}><Caret $closed />默认</GroupRow>
      <GroupRow $h={13} $lit><Caret />Hack Set</GroupRow>
      <ul>
        {variables.map((v) => (
          <VarRow key={v.name} $selected={v.selected}>
            <span>{v.name}</span>
            <TypePill $red={v.red} />
            <span>{v.type}</span>
            {v.shown ? <EyeIcon /> : <EyeShutIcon />}
          </VarRow>
        ))}
      </ul>
      <GroupRow $h={13}><Caret $closed />Camera</GroupRow>
      <SectionHead><Caret $hidden />EVENT DISPATCHERS<AddTo what="event dispatcher" /></SectionHead>
    </Panel>
    <PointerArrow $top={370} $left={116} width="130" height="84" viewBox="0 0 130 84" aria-hidden="true">
      <path d="M127 2L24 70L8 80L2 79L6 70L20 64Z" fill="#c9202a" />
    </PointerArrow>
  </Sidebar>
);

/* ---------- status bar ---------- */

const StatusBar = styled.footer`
  display: flex;
  align-items: center;
  height: 23px;
  margin-top: 1px;
  background: #242424;
`;

const StatusItem = styled.button<{ $w: number }>`
  display: flex;
  align-items: center;
  gap: 3px;
  width: ${(p) => p.$w}px;
  height: 23px;
  padding-left: 7px;
  border-right: 1px solid #181818;
`;

const ConsoleInput = styled.input`
  width: 199px;
  height: 14px;
  margin: 0 auto 0 4px;
  padding: 0 4px;
  border: 1px solid #303030;
  border-radius: 2px;
  background: #101010;
  font: 8px/12px "DejaVu Sans Mono", monospace;
  &::placeholder { color: #5c5c5c; opacity: 1; }
`;

/* ---------- watermarks and site logo ---------- */

const Overlay = styled.div`
  position: absolute;
  inset: 0;
  z-index: 5;
  overflow: hidden;
  pointer-events: none;
`;

const Mark = styled.span<{ $x: number; $y: number }>`
  position: absolute;
  left: ${(p) => p.$x}px;
  top: ${(p) => p.$y}px;
  color: rgba(255, 255, 255, 0.03);
  font: 700 48px/60px "Liberation Serif", "Noto Sans CJK SC", serif;
  translate: -50% -50%;
  rotate: -30deg;
`;

const SiteName = styled.div`
  position: absolute;
  top: 8px;
  left: 545px;
  color: rgba(190, 190, 190, 0.6);
  font: 700 20px/22px "Open Sans", "Noto Sans CJK SC", sans-serif;
`;

const SiteLogo = styled.div`
  position: absolute;
  left: 541px;
  bottom: 18px;
  display: flex;
  align-items: center;
  gap: 10px;
  color: #9a9a9a;
  strong { display: block; font: 700 36px/32px "DejaVu Sans", sans-serif; }
  span { display: block; font: 700 27px/22px "Noto Sans CJK SC", sans-serif; }
`;

const marks: [number, number, string][] = [
  [285, 65, "RRCG"], [810, 40, "人人素材"], [1080, 145, "RRCG"], [60, 215, "RRCG"],
  [480, 190, "人人素材"], [740, 260, "RRCG"], [130, 360, "人人素材"], [470, 380, "RRCG"],
  [1070, 330, "人人素材"], [220, 505, "RRCG"], [670, 500, "人人素材"], [950, 560, "RRCG"],
  [1240, 430, "RRCG"], [340, 640, "人人素材"], [640, 690, "RRCG"], [910, 690, "人人素材"],
  [1200, 130, "人人素材"], [1140, 660, "人人素材"],
];

const Watermarks = () => (
  <Overlay>
    {marks.map(([x, y, text]) => <Mark key={`${x}-${y}`} $x={x} $y={y}>{text}</Mark>)}
    <SiteName>人人CG www.rrcg.cn</SiteName>
    <SiteLogo>
      <svg width="76" height="76" viewBox="0 0 76 76" fill="none" aria-hidden="true">
        <path d="M4 31a35 35 0 0 1 68 0" stroke="#b4b8ba" strokeWidth="6" />
        <path d="M1 39h11M64 39h11" stroke="#28a0de" strokeWidth="5" />
        <path d="M4 38a34 34 0 0 0 68 0" stroke="#28a0de" strokeWidth="6" />
        <path d="M38 16v44" stroke="#28a0de" strokeWidth="7" strokeLinecap="round" />
        <path d="M38 13L18 21v12l4 4-4 5v13l6-4V41l4-3v12l5-3V34h-9V25l10-4h8l10 4v9h-9v13l5 3V38l4 3v10l6 4V42l-4-5 4-4V21z" fill="#28a0de" />
      </svg>
      <div><strong>RRCG</strong><span>人人素材</span></div>
    </SiteLogo>
  </Overlay>
);

/* ---------- page ---------- */

const assetTabs = [
  { name: "Lvl_HackWorld", icon: <LevelIcon /> },
  { name: "BP_HackCamera", icon: <ActorIcon /> },
  { name: "BP_HackableDevice", icon: <SphereIcon /> },
];

export default function App() {
  return (
    <Page>
      <GlobalStyle />
      <Header>
        <LogoBox><UnrealLogo /></LogoBox>
        <HeaderMain>
          <MenuRow>
            {["File", "Edit", "Asset", "View", "Debug", "Window", "Tools", "Help"].map((m) => <button key={m}>{m}</button>)}
          </MenuRow>
          <AssetTabs>
            {assetTabs.map((t) => <AssetTab key={t.name}>{t.icon}{t.name}</AssetTab>)}
            <AssetTab $active><ActorIcon />BP_HackControlCharacter<X size={8} strokeWidth={3} /></AssetTab>
          </AssetTabs>
        </HeaderMain>
        <HeaderSide>
          <WindowButtons>
            <button aria-label="Minimize"><svg width="10" height="10" viewBox="0 0 10 10" stroke="#c8c8c8"><path d="M1 6.500h7" /></svg></button>
            <button aria-label="Restore"><svg width="10" height="10" viewBox="0 0 10 10" stroke="#c8c8c8" fill="none"><path d="M1.500 3.500h5v5h-5zM3.500 3V1.500h5v5H7" /></svg></button>
            <button aria-label="Close"><X size={10} strokeWidth={2.500} /></button>
          </WindowButtons>
          <ParentClass>Parent class: <a href="#character">Character</a></ParentClass>
        </HeaderSide>
      </Header>

      <Toolbar>
        <ToolGroup $w={65} $gap={17}>
          <ToolButton aria-label="Save"><SaveIcon /></ToolButton>
          <ToolButton aria-label="Browse"><BrowseIcon /></ToolButton>
        </ToolGroup>
        <ToolGroup $w={80} $gap={8}>
          <ToolButton><CompileIcon />Compile</ToolButton>
          <ToolButton aria-label="Compile options"><DotsIcon /></ToolButton>
        </ToolGroup>
        <ToolGroup $w={60}>
          <ToolButton><DiffIcon />Diff<ChevronDown size={9} strokeWidth={3} /></ToolButton>
        </ToolGroup>
        <ToolGroup $w={148} $gap={9}>
          <ToolButton><FindIcon />Find</ToolButton>
          <ToolButton><HideIcon />Hide Unrelated</ToolButton>
          <ToolButton aria-label="Hide options"><DotsIcon /></ToolButton>
        </ToolGroup>
        <ToolGroup $w={250} $gap={13}>
          <ToolButton><Settings size={13} strokeWidth={2.500} />Class Settings</ToolButton>
          <ToolButton><PenIcon s={13} />Class Defaults</ToolButton>
          <ToolButton><SimIcon />Simulation</ToolButton>
        </ToolGroup>
        <PlayGroup>
          <button aria-label="Play"><PlayIcon /></button>
          <button aria-label="Step"><StepIcon /></button>
          <button aria-label="Stop"><StopIcon /></button>
          <button aria-label="Eject"><EjectIcon /></button>
          <button aria-label="Play options"><DotsIcon /></button>
        </PlayGroup>
        <DebugTarget>
          <Drop label="Debug object" value="No debug object selected" w={118} h={18} tight />
          <ToolButton aria-label="Locate debug object"><BrowseIcon c="#666" s={12} /></ToolButton>
        </DebugTarget>
      </Toolbar>

      <Main>
        <LeftColumn />
        <Center>
          <TabStrip>
            <PanelTab><TabLabel><ViewIcon />Viewport</TabLabel></PanelTab>
            <PanelTab><TabLabel><FuncIcon />Construction Scr...</TabLabel></PanelTab>
            <PanelTab $active>
              <TabLabel><GraphIcon s={11} />EventGraph</TabLabel>
              <CloseButton aria-label="Close EventGraph"><X size={9} strokeWidth={3} /></CloseButton>
            </PanelTab>
          </TabStrip>
          <Graph />
          <Results>
            <TabStrip>
              <PanelTab $active>
                <TabLabel><LogIcon />Compiler Results</TabLabel>
                <CloseButton aria-label="Close Compiler Results"><X size={9} strokeWidth={3} /></CloseButton>
              </PanelTab>
              <PanelTab><TabLabel><Search size={11} strokeWidth={2.500} />Find Results</TabLabel></PanelTab>
            </TabStrip>
            <ResultsFoot>
              <FootButton>SHOW<ChevronDown size={9} strokeWidth={3} /></FootButton>
              <FootButton $dim disabled>CLEAR</FootButton>
            </ResultsFoot>
          </Results>
        </Center>
        <DetailsPanel />
      </Main>

      <StatusBar>
        <StatusItem $w={89}><BrowseIcon s={11} c="#bdbdbd" />Content Drawer</StatusItem>
        <StatusItem $w={69}><LogIcon />Output Log</StatusItem>
        <StatusItem $w={57}><CmdIcon />Cmd<ChevronDown size={9} strokeWidth={3} /></StatusItem>
        <ConsoleInput placeholder="Enter Console Command" aria-label="Console command" />
        <StatusItem $w={73}><UnsavedIcon />1 Unsaved</StatusItem>
        <StatusItem $w={109}><BranchIcon />Revision Control<ChevronDown size={9} strokeWidth={3} /></StatusItem>
      </StatusBar>
      <Watermarks />
    </Page>
  );
}
